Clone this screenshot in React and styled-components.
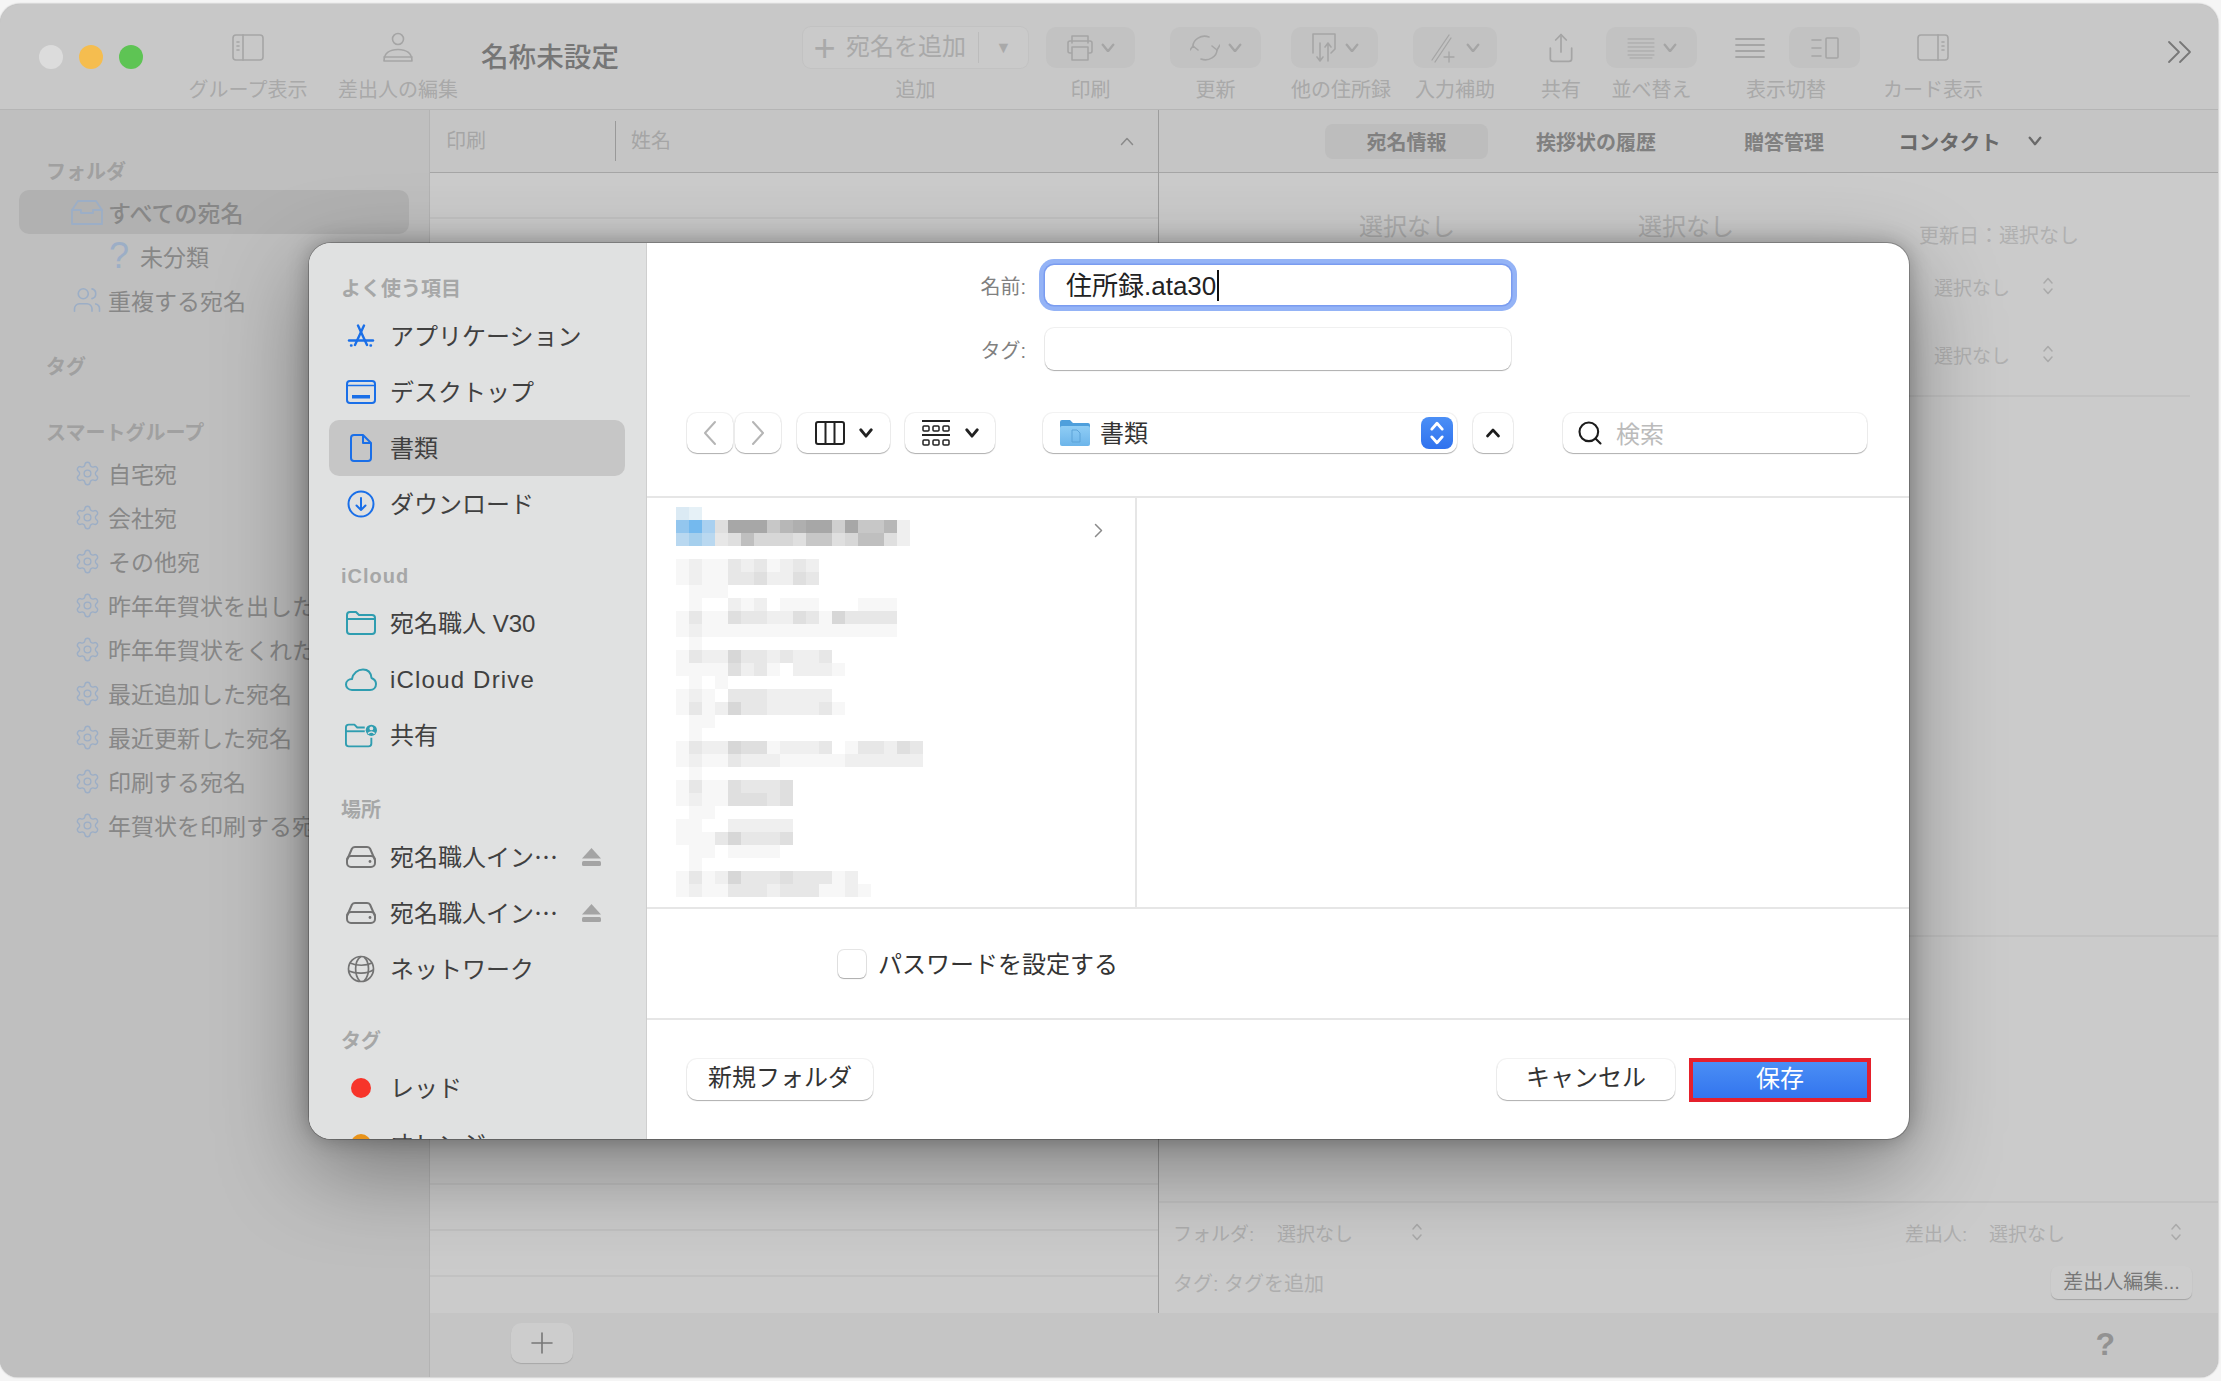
import styled, { createGlobalStyle } from "styled-components"
import { Settings, Users, Share, Search } from "lucide-react"

const GlobalStyle = createGlobalStyle`
    html, body {
        margin: 0;
        padding: 0;
        background: #f5f5f5;
        overflow: hidden;
    }
    * {
        box-sizing: border-box;
    }
    #root {
        font-family: "Liberation Sans", "Noto Sans CJK JP", sans-serif;
    }
`

const Page = styled.div`
    position: relative;
    width: 2221px;
    height: 1381px;
    padding-top: 4px;
`

const Window = styled.div`
    width: 2218px;
    height: 1373px;
    display: flex;
    flex-direction: column;
    overflow: hidden;
    border-radius: 20px 20px 18px 18px;
    background: #c6c6c6;
    box-shadow: 0 0 2px rgba(0, 0, 0, .45);
`

const Toolbar = styled.div`
    height: 106px;
    flex-shrink: 0;
    display: flex;
    align-items: flex-start;
    padding-left: 39px;
    background: #c8c8c8;
    border-bottom: 1px solid #b5b5b5;
`

const Lights = styled.div`
    width: 104px;
    height: 106px;
    flex-shrink: 0;
    display: flex;
    align-items: center;
    gap: 16px;
`

const Light = styled.span`
    width: 24px;
    height: 24px;
    border-radius: 50%;
    background: ${ (props) => props.color };
`

const ToolItem = styled.div`
    width: ${ (props) => props.$w }px;
    margin-left: ${ (props) => props.$ml || 0 }px;
    flex-shrink: 0;
    display: flex;
    flex-direction: column;
    align-items: ${ (props) => props.$start ? "flex-start" : "center" };
    padding-top: 23px;
`

const ToolRow = styled.div`
    height: 41px;
    display: flex;
    align-items: center;
    justify-content: ${ (props) => props.$pl ? "flex-start" : "center" };
    gap: ${ (props) => props.$gap ?? 8 }px;
    width: ${ (props) => props.$w ? `${props.$w}px` : "auto" };
    padding-left: ${ (props) => props.$pl || 0 }px;
    flex-shrink: 0;
    border-radius: 10px;
    background: ${ (props) => props.$filled ? "#c2c2c2" : "transparent" };
`

const ToolLabel = styled.div`
    width: 100%;
    margin-top: 10px;
    font-size: 20px;
    line-height: 24px;
    color: #a9a9a9;
    text-align: center;
    white-space: nowrap;
`

const WindowTitle = styled.div`
    width: 138px;
    margin-left: 3px;
    flex-shrink: 0;
    margin-top: 30px;
    font-size: 27.6px;
    line-height: 48px;
    font-weight: 500;
    color: #767676;
    white-space: nowrap;
`

const AddButton = styled.div`
    width: 225px;
    height: 41px;
    display: flex;
    align-items: center;
    border-radius: 8px;
    background: #cacaca;
    box-shadow: 0 0 0 1px #c2c2c2;
    color: #a9a9a9;
    font-size: 24px;
`

const AddPlus = styled.span`
    width: 43px;
    text-align: center;
    font-size: 38px;
    line-height: 32px;
    font-weight: 300;
`

const AddText = styled.span`
    width: 132px;
    margin-bottom: 6px;
    white-space: nowrap;
`

const AddCaret = styled.span`
    flex: 1;
    height: 31px;
    display: flex;
    align-items: center;
    justify-content: center;
    border-left: 1px solid #bcbcbc;
    font-size: 16px;
`

const OverflowMark = styled.div`
    margin-left: auto;
    margin-top: 36px;
    margin-right: 26px;
    line-height: 0;
`

const ViewIcon = styled.div`
    width: 71px;
    height: 41px;
    margin-left: 24px;
    display: flex;
    align-items: center;
    justify-content: center;
    border-radius: 10px;
    background: #c2c2c2;
`

const Body = styled.div`
    flex: 1;
    display: flex;
    min-height: 0;
`

const Sidebar = styled.div`
    width: 430px;
    flex-shrink: 0;
    padding-top: 44px;
    background: #bfbfbf;
    border-right: 1px solid #b3b3b3;
    overflow: hidden;
`

const SideHeading = styled.div`
    height: 36px;
    margin-top: ${ (props) => props.$mt || 0 }px;
    padding-left: 46px;
    font-size: 20px;
    line-height: 36px;
    font-weight: 700;
    color: #a0a0a0;
    white-space: nowrap;
`

const SideItem = styled.div`
    width: 390px;
    height: 44px;
    margin-left: 19px;
    padding-left: ${ (props) => 52 + (props.$indent || 0) }px;
    display: flex;
    align-items: center;
    gap: 5px;
    border-radius: 10px;
    background: ${ (props) => props.$active ? "#b1b1b1" : "transparent" };
    font-size: 23px;
    font-weight: ${ (props) => props.$active ? 500 : 400 };
    color: #878787;
    white-space: nowrap;
`

const SideIcon = styled.span`
    width: 32px;
    height: 32px;
    flex-shrink: 0;
    display: flex;
    align-items: center;
    justify-content: center;
    color: #9caec6;
    font-size: 36px;
    line-height: 32px;
`

const Main = styled.div`
    flex: 1;
    display: flex;
    flex-direction: column;
    min-width: 0;
`

const Split = styled.div`
    flex: 1;
    display: flex;
    min-height: 0;
`

const ListPane = styled.div`
    width: 729px;
    flex-shrink: 0;
    display: flex;
    flex-direction: column;
    overflow: hidden;
    background: #cbcbcb;
    border-right: 1px solid #9d9d9d;
`

const ListHeader = styled.div`
    height: 63px;
    flex-shrink: 0;
    display: flex;
    align-items: center;
    background: #c5c5c5;
    border-bottom: 1px solid #a5a5a5;
    font-size: 20px;
    color: #a5a5a5;
`

const HeaderCell = styled.div`
    width: ${ (props) => props.$w }px;
    height: 40px;
    padding-left: ${ (props) => props.$pl }px;
    line-height: 40px;
    border-right: ${ (props) => props.$sep ? "1px solid #999" : "none" };
`

const SortMark = styled.div`
    margin-left: auto;
    margin-right: 24px;
    line-height: 0;
`

const ListRow = styled.div`
    height: 46px;
    flex-shrink: 0;
    border-bottom: 2px solid #c2c2c2;
`

const DetailPane = styled.div`
    flex: 1;
    display: flex;
    flex-direction: column;
    min-width: 0;
    background: #cbcbcb;
`

const Tabs = styled.div`
    height: 63px;
    flex-shrink: 0;
    display: flex;
    align-items: center;
    padding-left: 166px;
    background: #c5c5c5;
    border-bottom: 1px solid #a5a5a5;
`

const Tab = styled.div`
    width: ${ (props) => props.$w }px;
    height: 35px;
    display: flex;
    align-items: center;
    justify-content: center;
    gap: 27px;
    border-radius: 8px;
    background: ${ (props) => props.$active ? "#bdbdbd" : "transparent" };
    font-size: ${ (props) => props.$strong ? 20.5 : 20 }px;
    font-weight: 700;
    color: ${ (props) => props.$strong ? "#6a6a6a" : "#808080" };
    white-space: nowrap;
`

const Summary = styled.div`
    height: 224px;
    flex-shrink: 0;
    display: flex;
    padding-left: 200px;
    margin-right: 28px;
    border-bottom: 2px solid #c2c2c2;
`

const EmptyName = styled.div`
    width: 96px;
    margin-right: ${ (props) => props.$mr }px;
    margin-top: 37px;
    font-size: 24px;
    line-height: 34px;
    color: #aeaeae;
`

const SummaryMeta = styled.div`
    display: flex;
    flex-direction: column;
`

const UpdatedAt = styled.div`
    margin-top: 50px;
    font-size: 20px;
    line-height: 26px;
    color: #b0b0b0;
    white-space: nowrap;
`

const MetaSelect = styled.div`
    margin-top: ${ (props) => props.$mt }px;
    margin-left: 15px;
    display: flex;
    align-items: center;
    height: 26px;
    gap: 32px;
    font-size: 19px;
    color: #b0b0b0;
`

const Spacer = styled.div`
    height: ${ (props) => props.$h }px;
    flex-shrink: 0;
    border-bottom: 2px solid #c2c2c2;
`

const MetaForm = styled.div`
    flex: 1;
    display: flex;
    flex-direction: column;
    padding: 16px 26px 0 14px;
`

const MetaLine = styled.div`
    display: flex;
    align-items: center;
    height: ${ (props) => props.$h }px;
    margin-top: ${ (props) => props.$mt || 0 }px;
    font-size: ${ (props) => props.$size || 19 }px;
    color: #aeaeae;
    white-space: nowrap;
`

const MetaKey = styled.span`
    width: ${ (props) => props.$w }px;
    flex-shrink: 0;
`

const MetaGap = styled.span`
    width: ${ (props) => props.$w }px;
    flex-shrink: 0;
    line-height: 0;
`

const SenderButton = styled.div`
    margin-left: auto;
    width: 141px;
    height: 33px;
    line-height: 33px;
    text-align: center;
    border-radius: 7px;
    background: #cdcdcd;
    box-shadow: 0 1px 1px rgba(0, 0, 0, .2);
    font-size: 20px;
    color: #777;
`

const BottomBar = styled.div`
    height: 64px;
    flex-shrink: 0;
    display: flex;
    align-items: center;
    padding: 0 103px 5px 81px;
    background: #c5c5c5;
`

const PlusButton = styled.div`
    width: 62px;
    height: 40px;
    display: flex;
    align-items: center;
    justify-content: center;
    border-radius: 10px;
    background: #cdcdcd;
    box-shadow: 0 1px 1px rgba(0, 0, 0, .15);
    line-height: 0;
`

const HelpMark = styled.div`
    margin-left: auto;
    margin-top: 4px;
    font-size: 32px;
    font-weight: 700;
    color: #929292;
`

const Dialog = styled.div`
    position: absolute;
    left: 309px;
    top: 243px;
    width: 1600px;
    height: 896px;
    display: flex;
    overflow: hidden;
    border-radius: 22px;
    background: #fff;
    box-shadow: 0 30px 90px rgba(0, 0, 0, .38), 0 0 22px rgba(0, 0, 0, .28), 0 0 0 1px rgba(0, 0, 0, .22);
`

const Places = styled.div`
    width: 338px;
    flex-shrink: 0;
    padding-top: 28px;
    background: #e0e1e1;
    border-right: 1px solid #cfcfcf;
    overflow: hidden;
`

const PlaceHeading = styled.div`
    height: 37px;
    margin-top: ${ (props) => props.$mt || 0 }px;
    padding-left: 32px;
    font-size: 20px;
    line-height: 37px;
    font-weight: 700;
    letter-spacing: ${ (props) => props.$track || 0 }px;
    color: #a6a7a7;
    white-space: nowrap;
`

const Place = styled.div`
    width: 296px;
    height: 56px;
    margin-left: 20px;
    padding-left: 16px;
    display: flex;
    align-items: center;
    border-radius: 10px;
    background: ${ (props) => props.$active ? "#c6c6c6" : "transparent" };
    font-size: 24px;
    letter-spacing: ${ (props) => props.$track || 0 }px;
    color: #404040;
    white-space: nowrap;
`

const PlaceIcon = styled.span`
    width: 32px;
    height: 32px;
    margin-right: 13px;
    flex-shrink: 0;
    display: flex;
    align-items: center;
    justify-content: center;
    line-height: 0;
`

const PlaceName = styled.span`
    margin-bottom: ${ (props) => props.$latin ? -1 : 3 }px;
`

const JapaneseEllipsis = styled.span`
    font-family: "Noto Sans CJK JP", sans-serif;
`

const EjectMark = styled.span`
    margin-left: auto;
    margin-right: 24px;
    line-height: 0;
`

const TagDot = styled.span`
    width: 20px;
    height: 20px;
    border-radius: 50%;
    background: ${ (props) => props.color };
`

const Pane = styled.div`
    flex: 1;
    display: flex;
    flex-direction: column;
    min-width: 0;
`

const NameRow = styled.div`
    display: flex;
    align-items: center;
    height: ${ (props) => props.$h }px;
    margin-top: ${ (props) => props.$mt }px;
`

const FieldLabel = styled.div`
    width: 379px;
    margin-right: 19px;
    text-align: right;
    font-size: 20px;
    color: #808080;
`

const Field = styled.div`
    width: 466px;
    height: 100%;
    display: flex;
    align-items: center;
    padding-left: 21px;
    border-radius: 9px;
    background: #fff;
    font-size: 26px;
    color: #222;
    box-shadow: ${ (props) => props.$focus
        ? "0 0 0 1.5px #7a9cf0, 0 0 0 6px #94b3f6"
        : "0 1px 1px rgba(0, 0, 0, .28), 0 0 0 1px rgba(0, 0, 0, .06)" };
`

const FieldText = styled.span`
    margin-bottom: 3px;
`

const Caret = styled.span`
    width: 2px;
    height: 31px;
    margin-left: 1px;
    background: #111;
`

const NavRow = styled.div`
    height: 40px;
    margin-top: 43px;
    padding-left: 40px;
    display: flex;
`

const NavButton = styled.div`
    width: ${ (props) => props.$w }px;
    margin-left: ${ (props) => props.$ml || 0 }px;
    height: 100%;
    flex-shrink: 0;
    display: flex;
    align-items: center;
    justify-content: center;
    gap: ${ (props) => props.$gap || 0 }px;
    border-radius: 10px;
    background: #fff;
    box-shadow: 0 1px 1px rgba(0, 0, 0, .28), 0 0 0 1px rgba(0, 0, 0, .05);
    line-height: 0;
`

const PathPopup = styled.div`
    width: 414px;
    height: 100%;
    margin-left: 48px;
    flex-shrink: 0;
    display: flex;
    align-items: center;
    padding: 0 4px 0 17px;
    border-radius: 10px;
    background: #fff;
    box-shadow: 0 1px 1px rgba(0, 0, 0, .28), 0 0 0 1px rgba(0, 0, 0, .05);
    font-size: 24px;
    color: #333;
`

const PathName = styled.span`
    margin-left: 10px;
    margin-bottom: 4px;
`

const Stepper = styled.span`
    width: 32px;
    height: 32px;
    margin-left: auto;
    display: flex;
    align-items: center;
    justify-content: center;
    border-radius: 8px;
    background: linear-gradient(#4b8ff6, #2f72ee);
    line-height: 0;
`

const SearchBox = styled.div`
    width: 304px;
    height: 100%;
    margin-left: 50px;
    flex-shrink: 0;
    display: flex;
    align-items: center;
    gap: 12px;
    padding-left: 13px;
    border-radius: 10px;
    background: #fff;
    box-shadow: 0 1px 1px rgba(0, 0, 0, .28), 0 0 0 1px rgba(0, 0, 0, .05);
    font-size: 24px;
    color: #bbb;
`

const SearchHint = styled.span`
    margin-bottom: 2px;
`

const Browser = styled.div`
    height: 413px;
    margin-top: 43px;
    flex-shrink: 0;
    display: flex;
    border-top: 2px solid #e6e6e6;
    border-bottom: 2px solid #e6e6e6;
`

const BrowserColumn = styled.div`
    width: 490px;
    flex-shrink: 0;
    display: flex;
    justify-content: space-between;
    padding: 9px 32px 0 29px;
    border-right: 2px solid #e6e6e6;
`

const DisclosureMark = styled.div`
    margin-top: 16px;
    line-height: 0;
`

const OptionRow = styled.div`
    height: 109px;
    flex-shrink: 0;
    display: flex;
    align-items: center;
    gap: 12px;
    padding-left: 191px;
    border-bottom: 2px solid #e6e6e6;
    box-sizing: content-box;
    font-size: 24px;
    color: #333;
`

const OptionText = styled.span`
    margin-bottom: 2px;
`

const Checkbox = styled.span`
    width: 28px;
    height: 28px;
    border-radius: 6px;
    background: #fff;
    box-shadow: 0 1px 1px rgba(0, 0, 0, .25), 0 0 0 1px rgba(0, 0, 0, .1);
`

const Footer = styled.div`
    flex: 1;
    display: flex;
    align-items: center;
    padding: 0 38px 0 40px;
`

const FooterButton = styled.div`
    width: ${ (props) => props.$w }px;
    height: 41px;
    margin-left: ${ (props) => props.$push ? "auto" : "0" };
    line-height: 38px;
    text-align: center;
    border-radius: 10px;
    background: #fff;
    box-shadow: 0 1px 1px rgba(0, 0, 0, .28), 0 0 0 1px rgba(0, 0, 0, .05);
    font-size: 24px;
    color: #333;
`

const SaveButton = styled.div`
    width: 182px;
    height: 44px;
    margin-left: 14px;
    line-height: 33px;
    text-align: center;
    border: 4px solid #e5202c;
    background: linear-gradient(#4a8ef5, #3375ee);
    font-size: 24px;
    color: #fff;
`

// ---- drawings ----

const Line = ({ w = 30, h = 26, color = "#a5a5a5", sw = 1.6, children }) => (
    <svg width={w} height={h} viewBox={`0 0 ${w} ${h}`} fill="none" stroke={color} strokeWidth={sw} strokeLinecap="round" strokeLinejoin="round">
        {children}
    </svg>
)

const ChevronDown = ({ w = 14, color = "#a5a5a5", sw = 2 }) => (
    <svg width={w} height={w * .7} viewBox="0 0 12 8.4" fill="none" stroke={color} strokeWidth={sw} strokeLinecap="round" strokeLinejoin="round">
        <path d="M1.5 1.5 L6 7 L10.5 1.5" />
    </svg>
)

const UpDown = ({ color = "#aaa", sw = 1.5, w = 12, h = 20 }) => (
    <svg width={w} height={h} viewBox="0 0 12 20" fill="none" stroke={color} strokeWidth={sw} strokeLinecap="round" strokeLinejoin="round">
        <path d="M2 7 L6 2.5 L10 7" />
        <path d="M2 13 L6 17.5 L10 13" />
    </svg>
)

const GroupIcon = () => (
    <Line w={32} h={27}>
        <rect x="1" y="1" width="30" height="25" rx="3" />
        <path d="M11 1 V26" />
        <path d="M5 8 H7 M5 12 H7 M5 16 H7" />
    </Line>
)

const PersonIcon = () => (
    <Line w={32} h={31}>
        <circle cx="16" cy="7" r="5.5" />
        <path d="M2 29 C2 21 8 17.5 16 17.5 C24 17.5 30 21 30 29 Z" />
        <path d="M2 25 H30" />
    </Line>
)

const PrinterIcon = () => (
    <Line w={26} h={27}>
        <path d="M5 9 V2 H21 V9" />
        <rect x="1" y="7" width="24" height="12" rx="2" />
        <rect x="5" y="13" width="16" height="13" fill="#c2c2c2" />
    </Line>
)

const SyncIcon = () => (
    <Line w={30} h={28}>
        <path d="M19 3 C11 0 3 6 3 12" />
        <path d="M11 25 C19 28 27 22 27 16" />
        <path d="M22 12 L27 16 L30 11" />
        <path d="M0 16 L3 12 L8 16" />
    </Line>
)

const BookIcon = () => (
    <Line w={26} h={31}>
        <path d="M2 21 V2 H24 V17 L20 21" />
        <path d="M9 11 V29 M9 29 L6 25 M9 29 L12 25" />
        <path d="M17 29 V11 M17 11 L14 15 M17 11 L20 15" />
    </Line>
)

const PencilPlusIcon = () => (
    <Line w={28} h={30} sw={1.3}>
        <path d="M2 27 L19 2" />
        <path d="M5 29 L21 5" />
        <path d="M19 19 V29 M14 24 H24" />
    </Line>
)

const SortIcon = () => (
    <Line w={28} h={22} sw={1}>
        <path d="M1 2 H27 M1 6 H27 M1 10 H27 M1 14 H27 M1 18 H27 M3 21 H25" />
    </Line>
)

const ListIcon = () => (
    <Line w={30} h={22} sw={1.8}>
        <path d="M1 2 H29 M1 8 H29 M1 14 H29 M1 20 H29" />
    </Line>
)

const DetailIcon = () => (
    <Line w={28} h={22}>
        <rect x="15" y="1" width="12" height="20" rx="1" />
        <path d="M1 3 H10 M1 11 H10 M1 19 H10" />
    </Line>
)

const CardIcon = () => (
    <Line w={32} h={27}>
        <rect x="1" y="1" width="30" height="25" rx="3" />
        <path d="M21 1 V26" />
        <path d="M25 8 H27 M25 12 H27 M25 16 H27" />
    </Line>
)

const InboxIcon = () => (
    <Line w={32} h={26} color="#9caec6" sw={1.8}>
        <path d="M1 11 L7 2 H25 L31 11 V25 H1 Z" />
        <path d="M1 11 H10 V14 H22 V11 H31" />
    </Line>
)

const AppsIcon = () => (
    <svg width="28" height="24" viewBox="0 0 28 24" fill="none" stroke="#1a6fe8" strokeWidth="2.4" strokeLinecap="round">
        <path d="M11 1.5 L20 21" />
        <path d="M17 1.5 L8 21" />
        <path d="M2 16.5 H26" />
        <path d="M4 21.5 H4.5 M23.5 21.5 H24" />
    </svg>
)

const DesktopIcon = () => (
    <svg width="30" height="24" viewBox="0 0 30 24" fill="none" stroke="#1a6fe8" strokeWidth="2">
        <rect x="1" y="1" width="28" height="22" rx="3" />
        <path d="M1 5.5 H29" strokeWidth="1.5" />
        <rect x="6" y="15" width="18" height="3.5" fill="#1a6fe8" stroke="none" />
    </svg>
)

const DocIcon = () => (
    <svg width="22" height="28" viewBox="0 0 22 28" fill="none" stroke="#1a6fe8" strokeWidth="2" strokeLinejoin="round">
        <path d="M4 1 H13 L21 9 V24 Q21 27 18 27 H4 Q1 27 1 24 V4 Q1 1 4 1 Z" />
        <path d="M13 1 V9 H21" />
    </svg>
)

const DownloadIcon = () => (
    <svg width="28" height="28" viewBox="0 0 28 28" fill="none" stroke="#1a6fe8" strokeWidth="2" strokeLinecap="round" strokeLinejoin="round">
        <circle cx="14" cy="14" r="12.5" />
        <path d="M14 8 V20 M9.5 15.5 L14 20 L18.5 15.5" />
    </svg>
)

const FolderIcon = () => (
    <svg width="30" height="24" viewBox="0 0 30 24" fill="none" stroke="#2f9db0" strokeWidth="2" strokeLinejoin="round">
        <path d="M1 4 Q1 1 4 1 H10 L13 4 H26 Q29 4 29 7 V20 Q29 23 26 23 H4 Q1 23 1 20 Z" />
        <path d="M1 8 H29" />
    </svg>
)

const CloudIcon = () => (
    <svg width="32" height="23" viewBox="0 0 32 23" fill="none" stroke="#2f9db0" strokeWidth="2" strokeLinejoin="round">
        <path d="M7 22 C3 22 1 19 1 16.5 C1 13 4 11 7 11 C8 5 13 1.5 18 1.5 C23 1.5 26 5 26.5 10 C29 11 31 13 31 16 C31 19.5 28.5 22 25 22 Z" />
    </svg>
)

const SharedIcon = () => (
    <svg width="34" height="25" viewBox="0 0 34 25" fill="none" stroke="#2f9db0" strokeWidth="2" strokeLinejoin="round">
        <path d="M28 15 V21 Q28 24 25 24 H4 Q1 24 1 21 V4 Q1 1 4 1 H10 L13 4 H21" />
        <path d="M1 8 H21" />
        <circle cx="28" cy="7" r="6" fill="#2f9db0" stroke="none" />
        <circle cx="28" cy="5" r="2" fill="#e0e1e1" stroke="none" />
        <path d="M24.5 10.5 Q28 7 31.5 10.5" stroke="#e0e1e1" strokeWidth="1.6" />
    </svg>
)

const DriveIcon = () => (
    <svg width="30" height="22" viewBox="0 0 30 22" fill="none" stroke="#737373" strokeWidth="2" strokeLinejoin="round">
        <path d="M1 14 L6 2.5 Q7 1 9 1 H21 Q23 1 24 2.5 L29 14" />
        <rect x="1" y="10" width="28" height="11" rx="4" />
        <circle cx="24" cy="15.5" r="1.4" fill="#737373" stroke="none" />
    </svg>
)

const GlobeIcon = () => (
    <svg width="28" height="28" viewBox="0 0 28 28" fill="none" stroke="#737373" strokeWidth="1.7">
        <circle cx="14" cy="14" r="12.5" />
        <path d="M14 1.5 C7 6 7 20 13 26.5" />
        <path d="M17 2 C23 7 23 20 17 26" />
        <path d="M3 8 C10 11 19 11 25 8" />
        <path d="M1.8 16 C9 19 20 19 26.2 15" />
    </svg>
)

const EjectIcon = () => (
    <svg width="19" height="18" viewBox="0 0 19 18" fill="#a4a4a4">
        <path d="M9.5 0 L19 10.5 H0 Z" />
        <rect y="13" width="19" height="5" rx="1.5" />
    </svg>
)

const NavChevron = ({ flip }) => (
    <svg width="14" height="26" viewBox="0 0 14 26" fill="none" stroke="#b5b5b5" strokeWidth="2" strokeLinecap="round" strokeLinejoin="round">
        <path d={flip ? "M2 2 L12 13 L2 24" : "M12 2 L2 13 L12 24"} />
    </svg>
)

const ColumnsIcon = () => (
    <svg width="30" height="24" viewBox="0 0 30 24" fill="none" stroke="#222" strokeWidth="2">
        <rect x="1" y="1" width="28" height="22" rx="2" />
        <path d="M10.5 1 V23 M19.5 1 V23" />
    </svg>
)

const GalleryIcon = () => (
    <svg width="28" height="27" viewBox="0 0 28 27" fill="none" stroke="#222" strokeWidth="1.5">
        <path d="M0 1 H28" strokeWidth="2" />
        <path d="M0 15 H28" strokeWidth="2" />
        <rect x="1" y="6" width="6" height="5" rx="1" />
        <rect x="11" y="6" width="6" height="5" rx="1" />
        <rect x="21" y="6" width="6" height="5" rx="1" />
        <rect x="1" y="20" width="6" height="5" rx="1" />
        <rect x="11" y="20" width="6" height="5" rx="1" />
        <rect x="21" y="20" width="6" height="5" rx="1" />
    </svg>
)

const BlueFolder = () => (
    <svg width="30" height="28" viewBox="0 0 30 28">
        <defs>
            <linearGradient id="folderFill" x1="0" y1="0" x2="0" y2="1">
                <stop offset="0" stopColor="#8fcdf5" />
                <stop offset="1" stopColor="#6db5ea" />
            </linearGradient>
        </defs>
        <path d="M0 3 Q0 1 2 1 H10 L13 4 H28 Q30 4 30 6 V9 H0 Z" fill="#4e9fdc" />
        <rect y="7" width="30" height="20" rx="2" fill="url(#folderFill)" />
        <path d="M12 11 H17 L20 14 V23 H12 Z" fill="none" stroke="#5da3d8" strokeWidth="1" />
    </svg>
)

const mosaicTop = { p: "#dbeaf4", q: "#e6f1f7", x: "#93c6ee", y: "#74b9ee", z: "#a9d0f0", u: "#b9d8f0", v: "#a5cfed" }

const mosaicRows = [
    "pq",
    "xyz4bbb79abb6b7792",
    "uvu3485554774588" + "42",
    "",
    "12113231232",
    "12113342243",
    "0111",
    "01002120111000111",
    "13114332243153333",
    "12111111111111111",
    "0100",
    "132253323223",
    "1111423102221",
    "0101",
    "121033322222",
    "1312533222231",
    "0110",
    "0100",
    "1322544122230133243",
    "1211322211111222222",
    "0100",
    "131143334",
    "121144434",
    "0110",
    "110022222",
    "111353334",
    "01101111",
    "0100",
    "13125333433312",
    "121133323331121",
]

const mosaicColor = (c) => mosaicTop[c] || `rgb(${[0, 0, 0].map(() => 255 - parseInt(c, 16) * 8).join(",")})`

// the file names are pixelated in the screenshot
const FileMosaic = () => (
    <svg width="247" height="390" viewBox="0 0 247 390" shapeRendering="crispEdges">
        {mosaicRows.map((row, y) => row.split("").map((c, x) => (
            c !== "0" && <rect key={`${x}-${y}`} x={x * 13} y={y * 13} width="13" height="13" fill={mosaicColor(c)} />
        )))}
    </svg>
)

const folderItems = [
    { label: "すべての宛名", active: true, icon: <InboxIcon /> },
    { label: "未分類", indent: 32, icon: "?" },
    { label: "重複する宛名", icon: <Users size={30} strokeWidth={1.3} /> },
]

const smartGroups = [
    "自宅宛",
    "会社宛",
    "その他宛",
    "昨年年賀状を出した宛名",
    "昨年年賀状をくれた宛名",
    "最近追加した宛名",
    "最近更新した宛名",
    "印刷する宛名",
    "年賀状を印刷する宛名",
]

const favorites = [
    { label: "アプリケーション", icon: <AppsIcon /> },
    { label: "デスクトップ", icon: <DesktopIcon /> },
    { label: "書類", active: true, icon: <DocIcon /> },
    { label: "ダウンロード", icon: <DownloadIcon /> },
]

const App = () => {
    return (
        <Page>
            <GlobalStyle />
            <Window>
                <Toolbar>
                    <Lights>
                        <Light color="#dcdcdc" />
                        <Light color="#f5bd4f" />
                        <Light color="#5ec454" />
                    </Lights>
                    <ToolItem $w={140} $ml={35}>
                        <ToolRow><GroupIcon /></ToolRow>
                        <ToolLabel>グループ表示</ToolLabel>
                    </ToolItem>
                    <ToolItem $w={160}>
                        <ToolRow><PersonIcon /></ToolRow>
                        <ToolLabel>差出人の編集</ToolLabel>
                    </ToolItem>
                    <WindowTitle>名称未設定</WindowTitle>
                    <ToolItem $w={225} $ml={184}>
                        <AddButton>
                            <AddPlus>+</AddPlus>
                            <AddText>宛名を追加</AddText>
                            <AddCaret>▼</AddCaret>
                        </AddButton>
                        <ToolLabel>追加</ToolLabel>
                    </ToolItem>
                    <ToolItem $w={89} $ml={18}>
                        <ToolRow $w={89} $filled><PrinterIcon /><ChevronDown /></ToolRow>
                        <ToolLabel>印刷</ToolLabel>
                    </ToolItem>
                    <ToolItem $w={91} $ml={35}>
                        <ToolRow $w={91} $filled><SyncIcon /><ChevronDown /></ToolRow>
                        <ToolLabel>更新</ToolLabel>
                    </ToolItem>
                    <ToolItem $w={100} $ml={30} $start>
                        <ToolRow $w={87} $filled><BookIcon /><ChevronDown /></ToolRow>
                        <ToolLabel>他の住所録</ToolLabel>
                    </ToolItem>
                    <ToolItem $w={84} $ml={22}>
                        <ToolRow $w={84} $filled><PencilPlusIcon /><ChevronDown /></ToolRow>
                        <ToolLabel>入力補助</ToolLabel>
                    </ToolItem>
                    <ToolItem $w={80} $ml={24}>
                        <ToolRow><Share size={32} color="#a5a5a5" strokeWidth={1.3} /></ToolRow>
                        <ToolLabel>共有</ToolLabel>
                    </ToolItem>
                    <ToolItem $w={91} $ml={5}>
                        <ToolRow $w={91} $filled><SortIcon /><ChevronDown /></ToolRow>
                        <ToolLabel>並べ替え</ToolLabel>
                    </ToolItem>
                    <ToolItem $w={134} $ml={22} $start>
                        <ToolRow $w={141} $gap={0} $pl={16}>
                            <ListIcon />
                            <ViewIcon><DetailIcon /></ViewIcon>
                        </ToolRow>
                        <ToolLabel>表示切替</ToolLabel>
                    </ToolItem>
                    <ToolItem $w={120} $ml={20}>
                        <ToolRow><CardIcon /></ToolRow>
                        <ToolLabel>カード表示</ToolLabel>
                    </ToolItem>
                    <OverflowMark>
                        <Line w={25} h={24} color="#777" sw={1.8}>
                            <path d="M2 2 L12 12 L2 22" />
                            <path d="M13 2 L23 12 L13 22" />
                        </Line>
                    </OverflowMark>
                </Toolbar>
                <Body>
                    <Sidebar>
                        <SideHeading>フォルダ</SideHeading>
                        {folderItems.map((f) => (
                            <SideItem key={f.label} $active={f.active} $indent={f.indent}>
                                <SideIcon>{f.icon}</SideIcon>
                                {f.label}
                            </SideItem>
                        ))}
                        <SideHeading $mt={27}>タグ</SideHeading>
                        <SideHeading $mt={30}>スマートグループ</SideHeading>
                        {smartGroups.map((g) => (
                            <SideItem key={g}>
                                <SideIcon><Settings size={27} strokeWidth={1.2} /></SideIcon>
                                {g}
                            </SideItem>
                        ))}
                    </Sidebar>
                    <Main>
                        <Split>
                            <ListPane>
                                <ListHeader>
                                    <HeaderCell $w={186} $pl={16} $sep>印刷</HeaderCell>
                                    <HeaderCell $w={200} $pl={15}>姓名</HeaderCell>
                                    <SortMark>
                                        <Line w={14} h={9} color="#8a8a8a" sw={1.5}>
                                            <path d="M1.5 7.5 L7 1.5 L12.5 7.5" />
                                        </Line>
                                    </SortMark>
                                </ListHeader>
                                {Array.from({ length: 25 }).map((_, i) => <ListRow key={i} />)}
                            </ListPane>
                            <DetailPane>
                                <Tabs>
                                    <Tab $w={163} $active>宛名情報</Tab>
                                    <Tab $w={216}>挨拶状の履歴</Tab>
                                    <Tab $w={160}>贈答管理</Tab>
                                    <Tab $w={212} $strong>
                                        コンタクト
                                        <ChevronDown color="#6a6a6a" />
                                    </Tab>
                                </Tabs>
                                <Summary>
                                    <EmptyName $mr={183}>選択なし</EmptyName>
                                    <EmptyName $mr={185}>選択なし</EmptyName>
                                    <SummaryMeta>
                                        <UpdatedAt>更新日：選択なし</UpdatedAt>
                                        <MetaSelect $mt={24}>選択なし<UpDown /></MetaSelect>
                                        <MetaSelect $mt={42}>選択なし<UpDown /></MetaSelect>
                                    </SummaryMeta>
                                </Summary>
                                <Spacer $h={540} />
                                <Spacer $h={266} />
                                <MetaForm>
                                    <MetaLine $h={26}>
                                        <MetaKey $w={104}>フォルダ:</MetaKey>
                                        選択なし
                                        <MetaGap $w={58} />
                                        <UpDown />
                                        <MetaGap $w={482} />
                                        <MetaKey $w={84}>差出人:</MetaKey>
                                        選択なし
                                        <MetaGap $w={105} />
                                        <UpDown />
                                    </MetaLine>
                                    <MetaLine $h={33} $mt={21} $size={20}>
                                        タグ: タグを追加
                                        <SenderButton>差出人編集...</SenderButton>
                                    </MetaLine>
                                </MetaForm>
                            </DetailPane>
                        </Split>
                        <BottomBar>
                            <PlusButton>
                                <Line w={22} h={22} color="#777" sw={1.6}>
                                    <path d="M11 1 V21 M1 11 H21" />
                                </Line>
                            </PlusButton>
                            <HelpMark>?</HelpMark>
                        </BottomBar>
                    </Main>
                </Body>
            </Window>
            <Dialog>
                <Places>
                    <PlaceHeading>よく使う項目</PlaceHeading>
                    {favorites.map((f) => (
                        <Place key={f.label} $active={f.active}>
                            <PlaceIcon>{f.icon}</PlaceIcon>
                            <PlaceName>{f.label}</PlaceName>
                        </Place>
                    ))}
                    <PlaceHeading $mt={26} $track={1}>iCloud</PlaceHeading>
                    <Place>
                        <PlaceIcon><FolderIcon /></PlaceIcon>
                        <PlaceName>宛名職人 V30</PlaceName>
                    </Place>
                    <Place $track={1.2}>
                        <PlaceIcon><CloudIcon /></PlaceIcon>
                        <PlaceName $latin>iCloud Drive</PlaceName>
                    </Place>
                    <Place>
                        <PlaceIcon><SharedIcon /></PlaceIcon>
                        <PlaceName>共有</PlaceName>
                    </Place>
                    <PlaceHeading $mt={29}>場所</PlaceHeading>
                    <Place>
                        <PlaceIcon><DriveIcon /></PlaceIcon>
                        <PlaceName>宛名職人イン<JapaneseEllipsis>…</JapaneseEllipsis></PlaceName>
                        <EjectMark><EjectIcon /></EjectMark>
                    </Place>
                    <Place>
                        <PlaceIcon><DriveIcon /></PlaceIcon>
                        <PlaceName>宛名職人イン<JapaneseEllipsis>…</JapaneseEllipsis></PlaceName>
                        <EjectMark><EjectIcon /></EjectMark>
                    </Place>
                    <Place>
                        <PlaceIcon><GlobeIcon /></PlaceIcon>
                        <PlaceName>ネットワーク</PlaceName>
                    </Place>
                    <PlaceHeading $mt={26}>タグ</PlaceHeading>
                    <Place>
                        <PlaceIcon><TagDot color="#f7342a" /></PlaceIcon>
                        <PlaceName>レッド</PlaceName>
                    </Place>
                    <Place>
                        <PlaceIcon><TagDot color="#e8931a" /></PlaceIcon>
                        <PlaceName>オレンジ</PlaceName>
                    </Place>
                </Places>
                <Pane>
                    <NameRow $h={40} $mt={22}>
                        <FieldLabel>名前:</FieldLabel>
                        <Field $focus><FieldText>住所録.ata30</FieldText><Caret /></Field>
                    </NameRow>
                    <NameRow $h={42} $mt={23}>
                        <FieldLabel>タグ:</FieldLabel>
                        <Field />
                    </NameRow>
                    <NavRow>
                        <NavButton $w={46}><NavChevron /></NavButton>
                        <NavButton $w={46} $ml={2}><NavChevron flip /></NavButton>
                        <NavButton $w={93} $ml={16} $gap={14}>
                            <ColumnsIcon />
                            <ChevronDown color="#222" w={14} sw={2.4} />
                        </NavButton>
                        <NavButton $w={90} $ml={15} $gap={15}>
                            <GalleryIcon />
                            <ChevronDown color="#222" w={14} sw={2.4} />
                        </NavButton>
                        <PathPopup>
                            <BlueFolder />
                            <PathName>書類</PathName>
                            <Stepper><UpDown color="#fff" sw={2.2} w={16} h={26} /></Stepper>
                        </PathPopup>
                        <NavButton $w={40} $ml={16}>
                            <Line w={14} h={10} color="#1c1c1c" sw={2.6}>
                                <path d="M1.5 8 L7 2 L12.5 8" />
                            </Line>
                        </NavButton>
                        <SearchBox>
                            <Search size={28} color="#1c1c1c" strokeWidth={1.8} />
                            <SearchHint>検索</SearchHint>
                        </SearchBox>
                    </NavRow>
                    <Browser>
                        <BrowserColumn>
                            <FileMosaic />
                            <DisclosureMark>
                                <Line w={9} h={15} color="#8a8a8a" sw={1.5}>
                                    <path d="M1.5 1.5 L7.5 7.5 L1.5 13.5" />
                                </Line>
                            </DisclosureMark>
                        </BrowserColumn>
                    </Browser>
                    <OptionRow>
                        <Checkbox />
                        <OptionText>パスワードを設定する</OptionText>
                    </OptionRow>
                    <Footer>
                        <FooterButton $w={186}>新規フォルダ</FooterButton>
                        <FooterButton $w={178} $push>キャンセル</FooterButton>
                        <SaveButton>保存</SaveButton>
                    </Footer>
                </Pane>
            </Dialog>
        </Page>
    )
}

export default App
